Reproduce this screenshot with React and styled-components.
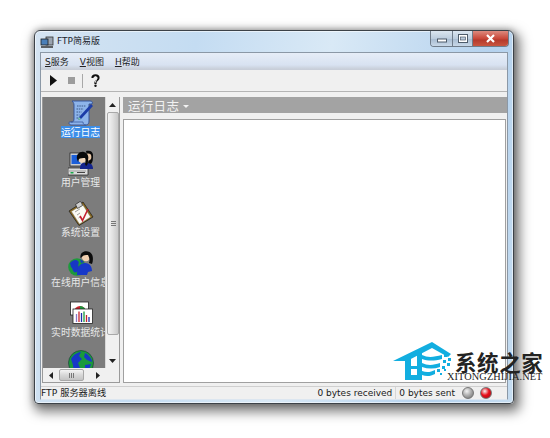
import React from "react";
import styled, { createGlobalStyle } from "styled-components";

const Global = createGlobalStyle`
  html, body { margin: 0; padding: 0; background: #fff; }
  body { width: 550px; height: 438px; overflow: hidden; font-family: "DejaVu Sans", "Noto Sans CJK SC", sans-serif; }
`;
const Page = styled.div`
  position: relative;
  width: 550px;
  height: 438px;
  padding: 30px 0 0 34px;
  box-sizing: border-box;
  overflow: hidden;
`;
const Win = styled.div`
  width: 480px;
  height: 374px;
  box-sizing: border-box;
  display: flex;
  flex-direction: column;
  border: 1px solid #3c4248;
  border-radius: 6px 6px 4px 4px;
  background: linear-gradient(100deg, #d5e4f2 0%, #c4dcf2 30%, #d9e9f6 55%, #b5d2ee 85%, #c5dcf0 100%);
  box-shadow: 3px 5px 12px 3px rgba(0,0,0,.5), 0 0 6px rgba(0,0,0,.3), inset 0 0 0 1px rgba(255,255,255,.55);
  padding: 0 5px 3px;
`;
const TitleBar = styled.div`
  height: 21px;
  flex: none;
  display: flex;
  align-items: flex-start;
`;
const TitleIcon = styled.svg`
  width: 14px; height: 14px; margin: 4px 3px 0 0; flex: none;
`;
const TitleText = styled.div`
  font-size: 9px;
  line-height: 12px;
  color: #1c242c;
  margin-top: 4px;
  flex: 1;
`;
const Caption = styled.div`
  display: flex;
  height: 15px;
  margin-right: -1px;
  border: 1px solid #6f7c8a;
  border-top: none;
  border-radius: 0 0 4px 4px;
  overflow: hidden;
`;
const CapBtn = styled.div`
  width: ${p => p.$w}px;
  display: flex;
  align-items: center;
  justify-content: center;
  background: ${p => p.$close
    ? "linear-gradient(#dd8a7e, #c9483a 50%, #b53a2c 60%, #c9553f)"
    : "linear-gradient(#dbe6f0, #bccdde 50%, #a9bdd2 55%, #c8d8e8)"};
  border-left: ${p => p.$first ? "none" : "1px solid #6f7c8a"};
`;
const Client = styled.div`
  flex: 1;
  min-height: 0;
  display: flex;
  flex-direction: column;
  background: #f0f0f0;
  border: 1px solid #8b98a6;
  border-bottom-color: #dce6f0;
`;
const MenuBar = styled.div`
  height: 17px;
  flex: none;
  display: flex;
  align-items: center;
  gap: 11px;
  padding-left: 4px;
  background: linear-gradient(#e6edf7, #d8e2f1 70%, #c8ced9 95%);
  font-size: 9px;
  color: #222;
  & u { text-decoration: underline; }
`;
const ToolBar = styled.div`
  height: 21px;
  flex: none;
  display: flex;
  align-items: center;
  padding-left: 9px;
  background: #f0f0f0;
  border-bottom: 1px solid #b4b4b4;
`;
const ToolGap = styled.span`
  width: ${p => p.$w}px;
  flex: none;
`;
const ToolSep = styled.span`
  width: 1px;
  height: 14px;
  background: #a8a8a8;
  flex: none;
`;
const Body = styled.div`
  flex: 1;
  min-height: 0;
  display: flex;
  padding: 5px 0 3px 1px;
  gap: 3px;
`;
const Left = styled.div`
  width: 78px;
  flex: none;
  display: flex;
  flex-direction: column;
  border: 1px solid #9a9a9a;
  border-top: none;
  box-sizing: border-box;
`;
const LeftTop = styled.div`
  flex: 1;
  min-height: 0;
  display: flex;
`;
const Bar = styled.div`
  width: 62px;
  flex: none;
  background: #7c7c7c;
  overflow: hidden;
  display: flex;
  flex-direction: column;
  align-items: flex-start;
  padding-top: 3px;
  box-sizing: border-box;
`;
const Item = styled.div`
  width: 75px;
  height: 50px;
  flex: none;
  display: flex;
  flex-direction: column;
  align-items: center;
  & svg { width: 26px; height: 26px; flex: none; }
`;
const Label = styled.span`
  font-family: "Noto Sans CJK SC", sans-serif;
  font-size: 9.8px;
  line-height: 12px;
  white-space: nowrap;
  color: ${p => p.$active ? "#fff" : "#e8e8e8"};
  background: ${p => p.$active ? "#3d8ee8" : "transparent"};
`;
const VScroll = styled.div`
  width: 14px;
  flex: none;
  display: flex;
  flex-direction: column;
  background: #f0f0f0;
  border-left: 1px solid #d8d8d8;
  box-sizing: border-box;
`;
const Arrow = styled.div`
  height: ${p => p.$h ? p.$h + "px" : "auto"};
  width: ${p => p.$w ? p.$w + "px" : "auto"};
  flex: none;
  display: flex;
  align-items: center;
  justify-content: center;
  & svg { display: block; }
`;
const VThumb = styled.div`
  height: 223px;
  flex: none;
  margin-left: 1px;
  display: flex;
  align-items: center;
  justify-content: center;
  background: linear-gradient(90deg, #f4f4f4, #e2e2e2 45%, #c8c8c8);
  border: 1px solid #a8a8a8;
  border-radius: 2px;
  box-sizing: border-box;
`;
const VTrack = styled.div`
  flex: 1;
`;
const HScroll = styled.div`
  height: 14px;
  flex: none;
  display: flex;
  align-items: center;
  background: #f0f0f0;
`;
const HThumb = styled.div`
  width: 25px;
  height: 12px;
  margin-left: 1px;
  flex: none;
  background: linear-gradient(#f4f4f4, #d8d8d8 50%, #c4c4c4);
  border: 1px solid #a8a8a8;
  border-radius: 2px;
  box-sizing: border-box;
  display: flex;
  align-items: center;
  justify-content: center;
`;
const HTrack = styled.div`
  width: 7px;
  flex: none;
`;
const Main = styled.div`
  flex: 1;
  min-width: 0;
  display: flex;
  flex-direction: column;
  gap: 6px;
`;
const Header = styled.div`
  height: 16px;
  flex: none;
  display: flex;
  align-items: center;
  gap: 4px;
  padding-left: 5px;
  background: #a3a3a3;
  color: #f2f2f2;
  font-family: "Noto Sans CJK SC", sans-serif;
  font-size: 12.5px;
  letter-spacing: .3px;
`;
const Caret = styled.span`
  width: 0; height: 0;
  border-left: 3px solid transparent;
  border-right: 3px solid transparent;
  border-top: 3px solid #f2f2f2;
  margin-top: 2px;
`;
const LogPane = styled.div`
  flex: 1;
  background: #fff;
  border: 1px solid #a0a0a0;
  margin-right: 1px;
`;
const Status = styled.div`
  height: 12px;
  flex: none;
  display: flex;
  align-items: center;
  background: #f0f0f0;
  border-top: 1px solid #cfcfcf;
  font-size: 9px;
  line-height: 12px;
  color: #1a1a1a;
`;
const StatusMsg = styled.div`
  flex: 1;
  font-size: 9.2px;
`;
const StatusCell = styled.div`
  border-left: ${p => p.$sep ? "1px solid #d6d6d6" : "none"};
  padding: 0 ${p => p.$pr}px 0 ${p => p.$sep ? 3 : 0}px;
  white-space: nowrap;
`;
const Led = styled.span`
  width: 12px; height: 12px;
  border-radius: 50%;
  flex: none;
  margin-right: ${p => p.$mr}px;
  background: radial-gradient(circle at 38% 32%, #f4f4f4 0, ${p => p.$c} 45%, ${p => p.$d} 100%);
  border: 1px solid #777;
  box-sizing: border-box;
`;
const Watermark = styled.div`
  position: absolute;
  left: 393px;
  top: 342px;
  width: 157px;
  height: 42px;
  pointer-events: none;
`;
const MarkLogo = styled.svg`
  position: absolute;
  left: 0; top: 0;
  width: 60px; height: 40px;
`;
const MarkName = styled.div`
  position: absolute;
  left: 62px; top: 10px;
  font: 700 21.5px/19px "Noto Sans CJK SC", sans-serif;
  letter-spacing: .6px;
  color: #232323;
  white-space: nowrap;
`;
const MarkUrl = styled.div`
  position: absolute;
  left: 54px; top: 29px;
  font: 10.3px/12px "Liberation Serif", serif;
  letter-spacing: .1px;
  color: #222;
  white-space: nowrap;
`;

const ScrollIcon = () => (
  <svg viewBox="0 0 26 26">
    <path d="M4 1h18c2 0 3 1 2 3h-3v17c0 2-1 4-3 4H3c-2 0-3-3-1-3h2c1 0 2-1 2-3V5C6 3 5 2 4 1z" fill="#8db4ea" stroke="#2f4f96" strokeWidth=".9"/>
    <path d="M18 25c-2 0-3-1-3-3H3" fill="none" stroke="#2f4f96" strokeWidth=".7"/>
    <path d="M9 6h9M8.500 9h7M8.500 12h5M8.500 15h3M8.500 18h2" stroke="#33507f" strokeWidth=".9" strokeDasharray="1.500 .8"/>
    <path d="M10 20l1-3L23 4l2 2-12 13z" fill="#1c3ca8"/>
    <path d="M10 20l1-3 2 2z" fill="#7fd0a0"/>
  </svg>
);
const UsersIcon = () => (
  <svg viewBox="0 0 26 26">
    <rect x="2" y="3" width="13" height="13" fill="#c9cdd2" stroke="#1a1a1a" strokeWidth=".7"/>
    <rect x="3.500" y="5" width="9" height="9" fill="#1c5fd8"/>
    <path d="M0 18h20v7H0z" fill="#dcdcdc" stroke="#1a1a1a" strokeWidth=".7"/>
    <path d="M1 21h17" stroke="#777" strokeWidth=".6"/>
    <rect x="2.500" y="22" width="3" height="1.500" fill="#18a848"/>
    <rect x="9" y="22" width="8" height="1" fill="#444"/>
    <path d="M12 19c0-4 1-6 4-6h4c3 0 5 2 5 6z" fill="#14248c"/>
    <path d="M18 1c3-1 7 0 7 4s0 7-2 9l-3-1c1-3 1-5-1-7z" fill="#0a0a0a"/>
    <circle cx="20" cy="7" r="3.400" fill="#e8c8a8"/>
    <circle cx="14" cy="9" r="3.800" fill="#f2d8bc"/>
    <path d="M9 9c-1-5 3-8 7-7s5 5 4 8c0 2 0 5-2 6l-1-2c1-2 1-4 0-6-2 0-5 0-6 1l-1 3z" fill="#0a0a0a"/>
  </svg>
);
const ClipIcon = () => (
  <svg viewBox="0 0 26 26">
    <path d="M1 11L15 2l10 15-14 8.500z" fill="#8a6a20" stroke="#1a1a1a" strokeWidth=".7"/>
    <path d="M3.500 11.500L14.500 4.500l8 12.500-11 7z" fill="#fbfbf4" stroke="#888" strokeWidth=".4"/>
    <path d="M7.500 4.500L12 1.500l1.500 1 1 3-5 3z" fill="#cfcfcf" stroke="#222" strokeWidth=".7"/>
    <path d="M7 12l5-3.200M9 15l3-2M10.500 18l2-1.300" stroke="#777" strokeWidth=".7"/>
    <path d="M12 16l2.500 4.500L20 9" fill="none" stroke="#c42030" strokeWidth="1.600"/>
  </svg>
);
const GlobeUserIcon = () => (
  <svg viewBox="0 0 26 26">
    <circle cx="9" cy="17" r="8.800" fill="#1d9a3c"/>
    <path d="M2 13c3-3 6-4 8-2s-1 4 1 6-3 7-5 5-1-4-3-5zM12 9l4 3-3 1z" fill="#1736c4"/>
    <path d="M9 25c0-8 3-12 8-12s7 4 7 8l-4 1-1 3z" fill="#1738c8"/>
    <circle cx="18" cy="7" r="4.200" fill="#f0d0b0"/>
    <path d="M12.500 8c-1-6 5-8 9-6s4 8 2.500 12l-3-1c1-3 .5-5-1-8-2 0-5 0-6 2z" fill="#0c0c0c"/>
  </svg>
);
const ChartIcon = () => (
  <svg viewBox="0 0 26 26">
    <rect x="2.500" y="2" width="18" height="13" fill="#fff" stroke="#222" strokeWidth=".8"/>
    <path d="M6 12a6 6 0 0 1 12 0z" fill="#c8242c"/>
    <path d="M12 12V6a6 6 0 0 1 6 6z" fill="#1a9a3c"/>
    <rect x="5" y="9" width="19.500" height="14.500" fill="#fff" stroke="#222" strokeWidth=".8"/>
    <path d="M8.500 22v-8" stroke="#8a78c8" strokeWidth="1.300"/>
    <path d="M11 22v-10.500" stroke="#c8242c" strokeWidth="1.300"/>
    <path d="M13.500 22v-9" stroke="#1a2ea8" strokeWidth="1.300"/>
    <path d="M16 22v-10.500" stroke="#1a9a3c" strokeWidth="1.300"/>
    <path d="M18.500 22v-7" stroke="#c8242c" strokeWidth="1.300"/>
    <path d="M21 22v-5" stroke="#1a2ea8" strokeWidth="1.300"/>
  </svg>
);
const GlobeIcon = () => (
  <svg viewBox="0 0 26 26">
    <circle cx="13" cy="13" r="12.500" fill="#1a9a3c" stroke="#123" strokeWidth=".5"/>
    <path d="M3 9c3-5 7-7 10-7l-2 4 3 3-4 4 2 5-3 5c-3-2-4-5-4-8zM17 3c4 2 7 6 7 9l-5-2-3-3zM17 15l6-1c-1 4-3 7-6 9z" fill="#1738c8"/>
  </svg>
);
const Up = () => <svg width="7" height="4" viewBox="0 0 7 4"><path d="M3.500 0L7 4H0z" fill="#222"/></svg>;
const Down = () => <svg width="7" height="4" viewBox="0 0 7 4"><path d="M3.500 4L7 0H0z" fill="#222"/></svg>;
const LeftA = () => <svg width="4" height="7" viewBox="0 0 4 7"><path d="M0 3.500L4 0v7z" fill="#222"/></svg>;
const RightA = () => <svg width="4" height="7" viewBox="0 0 4 7"><path d="M4 3.500L0 0v7z" fill="#222"/></svg>;

const items = [
  { label: "运行日志", icon: <ScrollIcon />, active: true },
  { label: "用户管理", icon: <UsersIcon /> },
  { label: "系统设置", icon: <ClipIcon /> },
  { label: "在线用户信息", icon: <GlobeUserIcon /> },
  { label: "实时数据统计", icon: <ChartIcon /> },
  { label: "", icon: <GlobeIcon /> },
];

export default function App() {
  return (
    <Page>
      <Global />
      <Win>
        <TitleBar>
          <TitleIcon viewBox="0 0 14 14">
            <rect x="6" y="2" width="7" height="8" fill="#9aa4b0" stroke="#333" strokeWidth=".8"/>
            <rect x="1" y="4" width="7" height="6" fill="#4a7fb8" stroke="#222" strokeWidth=".8"/>
            <path d="M1 12h12" stroke="#333" strokeWidth="1.500"/>
          </TitleIcon>
          <TitleText>FTP简易版</TitleText>
          <Caption>
            <CapBtn $w={21} $first>
              <svg width="10" height="8" viewBox="0 0 10 8"><rect x=".5" y="4" width="9" height="3" fill="#fff" stroke="#4d5b6a"/></svg>
            </CapBtn>
            <CapBtn $w={19}>
              <svg width="10" height="9" viewBox="0 0 10 9"><rect x=".5" y=".5" width="9" height="8" fill="#fff" stroke="#4d5b6a"/><rect x="2.500" y="3" width="5" height="3" fill="#b9cadb" stroke="#4d5b6a" strokeWidth=".7"/></svg>
            </CapBtn>
            <CapBtn $w={35} $close>
              <svg width="11" height="9" viewBox="0 0 11 9"><path d="M2 1l7 7M9 1L2 8" stroke="#fff" strokeWidth="2.200"/></svg>
            </CapBtn>
          </Caption>
        </TitleBar>
        <Client>
          <MenuBar>
            <span><u>S</u>服务</span>
            <span><u>V</u>视图</span>
            <span><u>H</u>帮助</span>
          </MenuBar>
          <ToolBar>
            <svg width="7" height="11" viewBox="0 0 7 11"><path d="M0 0l7 5.500-7 5.500z" fill="#111"/></svg>
            <ToolGap $w={11} />
            <svg width="7" height="7" viewBox="0 0 7 7"><rect width="7" height="7" fill="#9c9c9c"/></svg>
            <ToolGap $w={7} />
            <ToolSep />
            <ToolGap $w={8} />
            <svg width="9" height="13" viewBox="0 0 9 13">
              <path d="M1.500 4C1.500 .5 7.500 .5 7.500 4c0 2-3 2.500-3 4.500V10" fill="none" stroke="#111" strokeWidth="2.200"/>
              <path d="M3 4c0-1.800 3-1.800 3 0 0 1.500-1.500 2-1.500 4.500" fill="none" stroke="#f0f0f0" strokeWidth="1"/>
              <circle cx="4.500" cy="11.800" r="1.200" fill="#111"/>
            </svg>
          </ToolBar>
          <Body>
            <Left>
              <LeftTop>
                <Bar>
                  {items.map((it, i) => (
                    <Item key={i}>
                      {it.icon}
                      {it.label && <Label $active={it.active}>{it.label}</Label>}
                    </Item>
                  ))}
                </Bar>
                <VScroll>
                  <Arrow $h={15}><Up /></Arrow>
                  <VThumb>
                    <svg width="5" height="5" viewBox="0 0 5 5"><path d="M0 .5h5M0 2.500h5M0 4.500h5" stroke="#777"/></svg>
                  </VThumb>
                  <VTrack />
                  <Arrow $h={14}><Down /></Arrow>
                </VScroll>
              </LeftTop>
              <HScroll>
                <Arrow $w={15}><LeftA /></Arrow>
                <HThumb>
                  <svg width="6" height="5" viewBox="0 0 6 5"><path d="M.5 0v5M2.500 0v5M4.500 0v5" stroke="#777"/></svg>
                </HThumb>
                <HTrack />
                <Arrow $w={14}><RightA /></Arrow>
              </HScroll>
            </Left>
            <Main>
              <Header>运行日志<Caret /></Header>
              <LogPane />
            </Main>
          </Body>
          <Status>
            <StatusMsg>FTP 服务器离线</StatusMsg>
            <StatusCell $pr={3}>0 bytes received</StatusCell>
            <StatusCell $sep $pr={7}>0 bytes sent</StatusCell>
            <Led $c="#b0b0b0" $d="#6a6a6a" $mr={6} />
            <Led $c="#e8101c" $d="#9c0a10" $mr={15} />
          </Status>
        </Client>
      </Win>
      <Watermark>
        <MarkLogo viewBox="0 0 60 40">
          <path d="M0 19L39 0l19 12-3 3-16-9-25 13z" fill="#12aee0"/>
          <path d="M12 18l6-3v23h-6zM12 33h17v5H12zM24 12l5-3v28h-5zM18 24h6v3h-6z" fill="#12aee0"/>
          <path d="M29 13c6 3 12 2 20 0v4c-8 2-14 2-20 0zM29 21c6 3 12 2 18 0v4c-6 2-12 2-18 0zM29 29c5 2 9 1 13-1v4c-4 2-8 3-13 1z" fill="#12aee0"/>
          <path d="M51 12h3v3h-3zM55 16h3v3h-3zM50 18h3v3h-3zM54 21h3v3h-3zM49 24h3v3h-3zM44 27h3v3h-3zM51 27h2v2h-2zM47 31h2v2h-2z" fill="#12aee0"/>
        </MarkLogo>
        <MarkName>系统之家</MarkName>
        <MarkUrl>XITONGZHIJIA.NET</MarkUrl>
      </Watermark>
    </Page>
  );
}
